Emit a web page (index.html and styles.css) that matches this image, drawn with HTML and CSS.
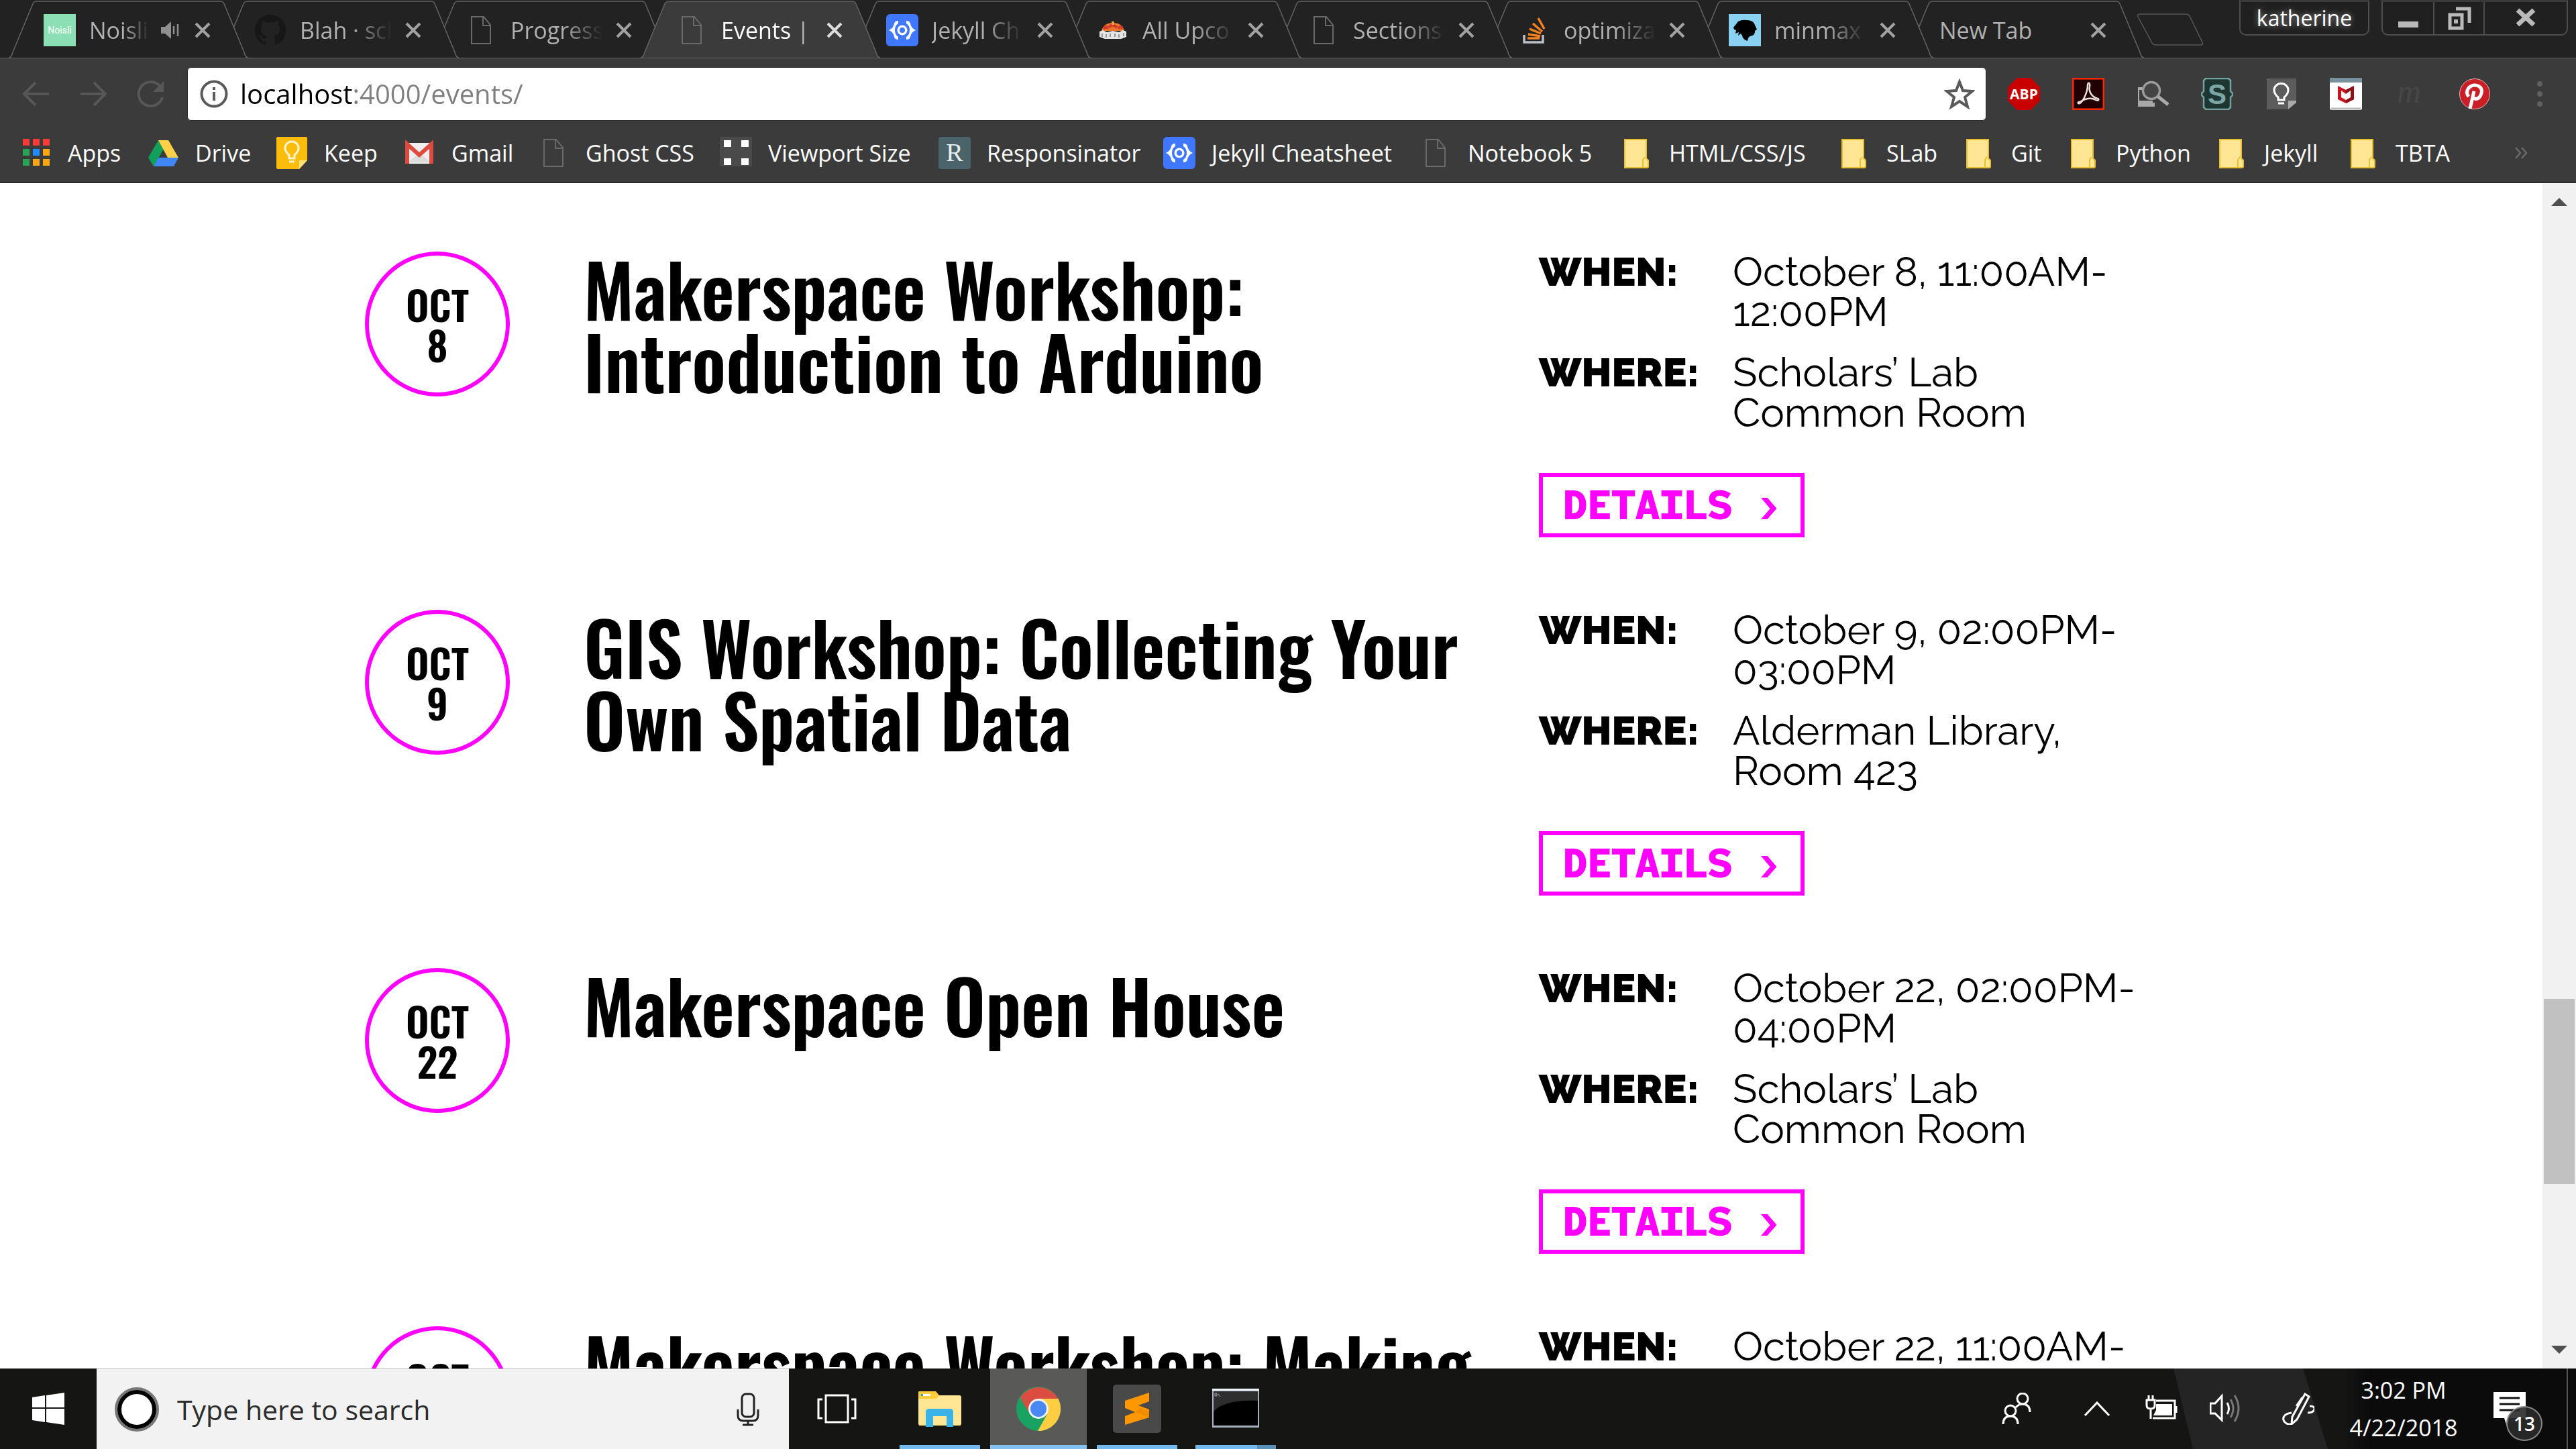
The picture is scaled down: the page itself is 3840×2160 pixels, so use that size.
FILE: index.html
```html
<!DOCTYPE html>
<html lang="en">
<head>
<meta charset="utf-8">
<title>Events</title>
<link rel="stylesheet" href="styles.css">
</head>
<body>
<svg class="defs" aria-hidden="true">
  <symbol id="page" viewBox="0 0 48 48"><path d="M10 4h18l10 12v28H10zM27 4v13h11" fill="none" stroke="#696969" stroke-width="2"/></symbol>
  <symbol id="folder" viewBox="0 0 48 48"><path d="M6 4h32v28l3 3v9q0 2-2 2H6z" fill="#ffe694" stroke="#e8c02f" stroke-width="2"/><path d="M33 46V34l3-4" fill="none" stroke="#e8c02f" stroke-width="2"/></symbol>
  <symbol id="jekyll" viewBox="0 0 48 48"><rect width="48" height="48" rx="6" fill="#3f78ff"/><path d="M18 10q-5 0-6 4-1 7-8 10 7 3 8 10 1 4 6 4v-4q-5-3-5-10t5-10zM30 10q5 0 6 4 1 7 8 10-7 3-8 10-1 4-6 4v-4q5-3 5-10t-5-10z" fill="#fff"/><circle cx="24" cy="24" r="7.500" fill="#fff"/><circle cx="24" cy="24" r="4" fill="#3f78ff"/></symbol>
  <symbol id="close" viewBox="0 0 24 24"><path d="M2 2l20 20M22 2L2 22" fill="none" stroke="currentColor" stroke-width="4"/></symbol>
  <symbol id="tabshape" viewBox="0 0 357 87"><path d="M0 86q4 0 6-8L35 8q2-6 6-6H316q4 0 6 6L351 78q2 8 6 8" fill="currentColor" stroke="#636363" stroke-width="1.500"/></symbol>
</svg>

<header class="browser">
  <div class="tabstrip">
    <div class="tabs">
      <div class="tab"><svg class="shape"><use href="#tabshape"/></svg>
        <svg class="fav" viewBox="0 0 48 48"><rect width="48" height="48" fill="#8cdfb4"/><text x="24" y="29" text-anchor="middle" font-size="14" font-family="Roboto, sans-serif" fill="#fff">Noisli</text></svg>
        <span class="label short">Noisli</span>
        <svg class="audio" viewBox="0 0 30 28"><path d="M1 9h6l9-8v26l-9-8H1z" fill="#8f8f8f"/><path d="M20 8v12M26 5v18" stroke="#8f8f8f" stroke-width="2.500"/></svg>
        <button class="x" aria-label="Close"><svg><use href="#close"/></svg></button></div>
      <div class="tab"><svg class="shape"><use href="#tabshape"/></svg>
        <svg class="fav" viewBox="0 0 48 48"><path d="M24 1a23 23 0 0 0-7 45v-6q-7 1-8-5l-3-3q4-1 6 3 2 2 5 1l2-3q-9-2-9-11 0-4 2-6-1-3 0-6 4 0 7 3 5-2 10 0 3-3 7-3 1 3 0 6 2 2 2 6 0 9-9 11 2 2 2 5v8A23 23 0 0 0 24 1z" fill="#171717"/></svg>
        <span class="label">Blah · scl</span>
        <button class="x" aria-label="Close"><svg><use href="#close"/></svg></button></div>
      <div class="tab"><svg class="shape"><use href="#tabshape"/></svg>
        <svg class="fav"><use href="#page"/></svg><span class="label">Progress</span>
        <button class="x" aria-label="Close"><svg><use href="#close"/></svg></button></div>
      <div class="tab active"><svg class="shape"><use href="#tabshape"/></svg>
        <svg class="fav"><use href="#page"/></svg><span class="label">Events |</span>
        <button class="x" aria-label="Close"><svg><use href="#close"/></svg></button></div>
      <div class="tab"><svg class="shape"><use href="#tabshape"/></svg>
        <svg class="fav"><use href="#jekyll"/></svg><span class="label">Jekyll Ch</span>
        <button class="x" aria-label="Close"><svg><use href="#close"/></svg></button></div>
      <div class="tab"><svg class="shape"><use href="#tabshape"/></svg>
        <svg class="fav" viewBox="0 0 48 48"><path d="M7 25Q10 13 24 13t17 12z" fill="#e8752a"/><path d="M10 22q4-6 6 0M18 20q5-7 12 0M32 22q4-6 6 0" stroke="#d33b2a" stroke-width="4" fill="none"/><path d="M22 11h4v5h-4z" fill="#e8a33a"/><path d="M4 26l5-2 6 3 9-2 9 2 6-3 5 2v8l-8 3H12l-8-3z" fill="#e5e5e5"/><path d="M8 29v5M14 30v5M20 29v5M27 29v5M33 30v5M40 28v5" stroke="#999" stroke-width="2"/></svg>
        <span class="label">All Upco</span>
        <button class="x" aria-label="Close"><svg><use href="#close"/></svg></button></div>
      <div class="tab"><svg class="shape"><use href="#tabshape"/></svg>
        <svg class="fav"><use href="#page"/></svg><span class="label">Sections</span>
        <button class="x" aria-label="Close"><svg><use href="#close"/></svg></button></div>
      <div class="tab"><svg class="shape"><use href="#tabshape"/></svg>
        <svg class="fav" viewBox="0 0 48 48"><path d="M9 31v11h28V31" fill="none" stroke="#b9c0c8" stroke-width="3.500"/><path d="M14 36h18M15 30l18 3M17 22l17 7M22 14l14 12M30 6l9 16" stroke="#f4801f" stroke-width="3.500"/></svg>
        <span class="label">optimiza</span>
        <button class="x" aria-label="Close"><svg><use href="#close"/></svg></button></div>
      <div class="tab"><svg class="shape"><use href="#tabshape"/></svg>
        <svg class="fav" viewBox="0 0 48 48"><rect width="48" height="48" fill="#88d1f1"/><path d="M7 20l4-5 3-4q6-3 12-2 9 0 12 5l4 9-3 2q0 6-4 7-5 1-6 4l-1 4q-7-2-8-8l-2-3-4 3 1-5-5 2 1-5-3-1z" fill="#000"/></svg>
        <span class="label">minmax</span>
        <button class="x" aria-label="Close"><svg><use href="#close"/></svg></button></div>
      <div class="tab"><svg class="shape"><use href="#tabshape"/></svg>
        <span class="label wide">New Tab</span>
        <button class="x" aria-label="Close"><svg><use href="#close"/></svg></button></div>
    </div>
    <button class="newtab" aria-label="New tab"><svg viewBox="0 0 100 48"><path d="M6 1H73q5 0 7 5l18 37q2 4-3 4H29q-5 0-7-5L2 5q-2-4 4-4z" fill="none" stroke="#585858" stroke-width="1.500"/></svg></button>
    <div class="winctl">
      <button class="profile">katherine</button>
      <div class="winbtns">
        <button aria-label="Minimize"><svg viewBox="0 0 40 36"><path d="M5 23h30v9H5z" fill="#b9b9b9"/></svg></button>
        <button aria-label="Restore"><svg viewBox="0 0 40 36"><path d="M6 13h18v20H6zM15 4h20v21" fill="none" stroke="#b9b9b9" stroke-width="5"/><path d="M12 20h6v6h-6z" fill="#b9b9b9"/></svg></button>
        <button aria-label="Close window"><svg viewBox="0 0 40 36"><path d="M8 6l24 22M32 6L8 28" stroke="#b9b9b9" stroke-width="7"/></svg></button>
      </div>
    </div>
  </div>

  <div class="toolbar">
    <button class="nav" aria-label="Back"><svg viewBox="0 0 42 42"><path d="M40 21H4M20 4L3 21l17 17" fill="none" stroke="#575757" stroke-width="4"/></svg></button>
    <button class="nav" aria-label="Forward"><svg viewBox="0 0 42 42"><path d="M2 21h36M22 4l17 17-17 17" fill="none" stroke="#575757" stroke-width="4"/></svg></button>
    <button class="nav" aria-label="Reload"><svg viewBox="0 0 42 42"><path d="M35 9A18 18 0 1 0 39 26" fill="none" stroke="#575757" stroke-width="4"/><path d="M41 2v16H25z" fill="#575757"/></svg></button>
    <div class="omnibox">
      <svg class="info" viewBox="0 0 42 42"><circle cx="21" cy="21" r="18.500" fill="none" stroke="#5a5a5a" stroke-width="4"/><path d="M21 18v13M21 11v4" stroke="#5a5a5a" stroke-width="4"/></svg>
      <input class="url" type="text" aria-label="Address" value="localhost:4000/events/">
      <button class="star" aria-label="Bookmark"><svg viewBox="0 0 46 46"><path d="M23 5l5 13 14 1-11 9 4 14-12-8-12 8 4-14L4 19l14-1z" fill="none" stroke="#5a5a5a" stroke-width="4"/></svg></button>
    </div>
    <div class="exts">
      <svg viewBox="0 0 48 48"><path d="M14 0h20l14 14v20L34 48H14L0 34V14z" fill="#c80000"/><text x="24" y="32" text-anchor="middle" font-family="Open Sans, sans-serif" font-weight="700" font-size="21" fill="#fff">ABP</text></svg>
      <svg viewBox="0 0 48 48"><rect x="1" y="1" width="46" height="46" fill="#200000" stroke="#ff2600" stroke-width="3"/><path d="M9 38c5 3 14-16 14-27 0-5 4-4 3 2-2 8 4 16 12 18 3 1 1 4-3 2-7-4-15-2-22 2-4 2-5 1-4 3z" fill="none" stroke="#eadede" stroke-width="2.500"/></svg>
      <svg viewBox="0 0 48 48"><path d="M2 14h7v4H4v16h20v3h3v6H2z" fill="#a9a9a9"/><circle cx="22" cy="19" r="12.500" fill="#444" stroke="#9a9a9a" stroke-width="3.500"/><path d="M32 28l15 12" stroke="#a9a9a9" stroke-width="5"/></svg>
      <svg viewBox="0 0 48 48"><path d="M7 1h34l3 3v16l3 3v3l-3 3v15l-3 3H7l-3-3V29l-3-3v-3l3-3V4z" fill="#1d3632" stroke="#76a09e" stroke-width="2.500"/><text x="24" y="39" text-anchor="middle" font-family="Liberation Sans, sans-serif" font-weight="700" font-size="42" fill="#7ba6a4">S</text></svg>
      <svg viewBox="0 0 48 48"><path d="M2 1h44v33L33 47H2z" fill="#5c5c5c"/><path d="M46 34v3L34 47V34z" fill="#aaa"/><path d="M19 33v-4q-6-5-6-11a10 9 0 0 1 21 0q0 6-6 11v4zM19 38h9" fill="none" stroke="#fff" stroke-width="3"/></svg>
      <svg viewBox="0 0 48 48"><rect width="48" height="48" rx="3" fill="#fff"/><path d="M0 7V3q0-3 3-3h42q3 0 3 3v4z" fill="#78909c"/><path d="M2 46h44" stroke="#b9b9b9" stroke-width="3"/><path d="M12 12l12 6 12-6v20l-12 6-12-6z" fill="#c8141e"/><path d="M24 18l12-6v20l-12 6v-5l7-3V21l-7 4z" fill="#8a1218"/><path d="M17 19l7 5 7-5v10l-7 4-7-4z" fill="#fff"/></svg>
      <svg viewBox="0 0 48 48"><text x="22" y="37" text-anchor="middle" font-family="Liberation Serif, serif" font-style="italic" font-size="50" fill="#474747">m</text></svg>
      <svg viewBox="0 0 48 48"><circle cx="24" cy="24" r="22.500" fill="#cb1f27" stroke="#e9b6b8"/><path d="M17 46l6-26M15 28q-5-6 0-13 6-6 14-3 7 3 5 11-3 10-10 8-3-1-3-3" fill="none" stroke="#fff" stroke-width="5"/></svg>
    </div>
    <button class="menu" aria-label="Menu"><svg viewBox="0 0 10 42"><circle cx="5" cy="6" r="4" fill="#5f5f5f"/><circle cx="5" cy="21" r="4" fill="#5f5f5f"/><circle cx="5" cy="36" r="4" fill="#5f5f5f"/></svg></button>
  </div>

  <nav class="bookmarks">
    <a href="#"><svg viewBox="0 0 48 48"><g transform="translate(5 3)"><path d="M0 0h10v10H0zM15 0h10v10H15zM30 0h10v10H30z" fill="#f93a37"/><path d="M0 15h10v10H0zM0 30h10v10H0z" fill="#2aa356"/><path d="M15 15h10v10H15z" fill="#1f8cff"/><path d="M30 15h10v10H30zM15 30h10v10H15zM30 30h10v10H30z" fill="#fba713"/></g></svg>Apps</a>
    <a href="#"><svg viewBox="0 0 48 48"><path d="M17 5L2 31l8 13 15-26z" fill="#11a05a"/><path d="M17 5h15l15 26H31z" fill="#ffcf48"/><path d="M17 31h30l-7 13H10z" fill="#4086f4"/></svg>Drive</a>
    <a href="#"><svg viewBox="0 0 48 48"><path d="M3 0h42q2 0 2 2v33L35 48H3q-2 0-2-2V2q0-2 2-2z" fill="#fbbc0c"/><path d="M47 35L35 48V35z" fill="#ffe27a"/><path d="M20 32v-5q-6-5-6-10a10 10 0 0 1 20 0q0 5-6 10v5zM20 37h8" fill="none" stroke="#fff4d0" stroke-width="3"/></svg>Keep</a>
    <a href="#"><svg viewBox="0 0 48 48"><path d="M5 9h38v31H5z" fill="#eee"/><path d="M7 38l17-14 17 14z" fill="#dcdcdc"/><path d="M6 40V11l18 16 18-16v29" fill="none" stroke="#dd4b3e" stroke-width="6"/></svg>Gmail</a>
    <a href="#"><svg><use href="#page"/></svg>Ghost CSS</a>
    <a href="#"><svg viewBox="0 0 48 48"><rect width="48" height="44" fill="#4a4a4a"/><path d="M6 5h11v10H6zM32 5h11v10H32zM6 32h11v10H6zM32 32h11v10H32z" fill="#fff"/></svg>Viewport Size</a>
    <a href="#"><svg viewBox="0 0 48 48"><rect width="48" height="48" rx="4" fill="#4b646b"/><text x="24" y="36" text-anchor="middle" font-family="Liberation Serif, serif" font-size="38" fill="#e8ecec">R</text></svg>Responsinator</a>
    <a href="#"><svg><use href="#jekyll"/></svg>Jekyll Cheatsheet</a>
    <a href="#"><svg><use href="#page"/></svg>Notebook 5</a>
    <a href="#"><svg><use href="#folder"/></svg>HTML/CSS/JS</a>
    <a href="#"><svg><use href="#folder"/></svg>SLab</a>
    <a href="#"><svg><use href="#folder"/></svg>Git</a>
    <a href="#"><svg><use href="#folder"/></svg>Python</a>
    <a href="#"><svg><use href="#folder"/></svg>Jekyll</a>
    <a href="#"><svg><use href="#folder"/></svg>TBTA</a>
    <button class="more" aria-label="More bookmarks"><svg viewBox="0 0 20 18"><path d="M2 1l7 8-7 8M11 1l7 8-7 8" fill="none" stroke="#6b6b6b" stroke-width="2.500"/></svg></button>
  </nav>
</header>

<div class="viewport">
  <main class="events">
    <article class="event">
      <div class="date"><span>OCT</span><span>8</span></div>
      <h2>Makerspace Workshop: Introduction to Arduino</h2>
      <div class="facts">
        <dl><dt>WHEN:</dt><dd>October 8, 11:00AM-<wbr>12:00PM</dd><dt>WHERE:</dt><dd>Scholars’ Lab Common Room</dd></dl>
        <a class="details" href="#">DETAILS ›</a>
      </div>
    </article>
    <article class="event">
      <div class="date"><span>OCT</span><span>9</span></div>
      <h2>GIS Workshop: Collecting Your Own Spatial Data</h2>
      <div class="facts">
        <dl><dt>WHEN:</dt><dd>October 9, 02:00PM-<wbr>03:00PM</dd><dt>WHERE:</dt><dd>Alderman Library, Room 423</dd></dl>
        <a class="details" href="#">DETAILS ›</a>
      </div>
    </article>
    <article class="event">
      <div class="date"><span>OCT</span><span>22</span></div>
      <h2>Makerspace Open House</h2>
      <div class="facts">
        <dl><dt>WHEN:</dt><dd>October 22, 02:00PM-<wbr>04:00PM</dd><dt>WHERE:</dt><dd>Scholars’ Lab Common Room</dd></dl>
        <a class="details" href="#">DETAILS ›</a>
      </div>
    </article>
    <article class="event">
      <div class="date"><span>OCT</span></div>
      <h2>Makerspace Workshop: Making</h2>
      <div class="facts">
        <dl><dt>WHEN:</dt><dd>October 22, 11:00AM-</dd></dl>
      </div>
    </article>
  </main>
  <div class="scrollbar">
    <svg viewBox="0 0 24 12"><path d="M0 12L12 0l12 12z" fill="#505050"/></svg>
    <div class="track"><div class="thumb"></div></div>
    <svg viewBox="0 0 24 12"><path d="M0 0l12 12L24 0z" fill="#505050"/></svg>
  </div>
</div>

<footer class="taskbar">
  <button class="start" aria-label="Start"><svg viewBox="0 0 48 48"><path d="M0 7l19-3v18H0zM21 4l27-4v22H21zM0 24h19v20L0 41zM21 24h27v24l-27-4z" fill="#fff"/></svg></button>
  <div class="search">
    <svg class="cortana" viewBox="0 0 66 66"><circle cx="33" cy="33" r="31" fill="#f2f2f2" stroke="#777" stroke-width="4"/><circle cx="33" cy="33" r="26" fill="#fff" stroke="#000" stroke-width="6"/></svg>
    <input type="text" aria-label="Search" placeholder="Type here to search">
    <svg class="mic" viewBox="0 0 34 50"><rect x="8" y="2" width="18" height="34" rx="6" fill="none" stroke="#222" stroke-width="3"/><path d="M2 25v9q0 8 8 8h14q8 0 8-8v-9M17 42v6M9 48h16" fill="none" stroke="#222" stroke-width="3"/></svg>
  </div>
  <div class="apps">
    <button aria-label="Task view"><svg viewBox="0 0 72 72"><path d="M19 16h33v40H19zM14 22H8v28h6M57 22h6v28h-6" fill="none" stroke="#fff" stroke-width="3"/></svg></button>
    <button class="running" aria-label="File Explorer"><svg viewBox="0 0 72 72"><path d="M4 12q0-2 2-2h23l5 6h31q3 0 3 3v39q0 3-3 3H7q-3 0-3-3z" fill="#ffe694"/><path d="M4 12q0-2 2-2h24l5 6-4 5H4z" fill="#ffcd3a"/><path d="M8 14h14v3H8z" fill="#fff"/><path d="M8 14h3v3H8z" fill="#27a2df"/><path d="M5 61h62" stroke="#a58f3e"/><path d="M15 63V41q0-5 5-5h31q5 0 5 5v22H46V47H26v16z" fill="#39b3e8"/></svg></button>
    <button class="running current" aria-label="Chrome"><svg viewBox="0 0 72 72"><circle cx="36" cy="36" r="33" fill="#19a261"/><path d="M36 36L9 19A33 33 0 0 1 65.500 21H36z" fill="#dc4c40"/><path d="M8 19l15 24 13-7z" fill="#dc4c40"/><path d="M36 21h29.500A33 33 0 0 1 35 69l14-25z" fill="#ffcd42"/><circle cx="36" cy="36" r="15" fill="#f3f3f3"/><circle cx="36" cy="36" r="12" fill="#4a88f4"/></svg></button>
    <button class="running" aria-label="Sublime Text"><svg viewBox="0 0 72 72"><rect width="72" height="72" rx="5" fill="#494949"/><path d="M54 12v13l-16 6 16 6v12L18 60V47l15-6-15-6V24z" fill="#ff9800"/><path d="M33 41l21 8V41l-13-6z" fill="#e58300" opacity=".6"/></svg></button>
    <button class="running multi" aria-label="Command Prompt"><svg viewBox="0 0 72 72"><path d="M1 6h70v58H1z" fill="#a9b2c0"/><path d="M1 6h70v3H1z" fill="#eef1f5"/><path d="M3 10h66v51H3z" fill="#000"/><path d="M3 10h66v14Q20 22 3 40z" fill="#2e2e2e"/><path d="M5 13h3v4H5zM10 14l3 4" stroke="#aaa" fill="none"/></svg></button>
  </div>
  <div class="tray">
    <svg class="people" viewBox="0 0 48 48"><circle cx="32" cy="9" r="8"/><path d="M22 22q4-5 10-5 11 0 11 12"/><circle cx="14" cy="27" r="8"/><path d="M3 47q0-12 11-12t11 12"/></svg>
    <svg viewBox="0 0 48 48"><path d="M6 34l18-19 18 19"/></svg>
    <svg viewBox="0 0 48 48"><path d="M16 12h28v26H11M46 20v10"/><path d="M16 17h24v17H12l4-8z" fill="#fff" stroke="none"/><path d="M5 4v7M11 4v7M2 11h12v8q0 5-6 5t-6-5zM8 24v15"/></svg>
    <svg viewBox="0 0 48 48"><path d="M1 16h7l10-11v36L8 31H1zM26 15q5 9 0 17"/><path d="M31 10q8 14 0 27M37 4q12 19 0 39" stroke="#777"/></svg>
    <svg class="pen" viewBox="0 0 48 48"><path d="M34 2l6 4-18 34-8 7 1-11zM30 7l-9 13M14 30Q0 32 2 41q3 7 13 6M41 20q8 0 7 5-2 5-10 5"/></svg>
    <div class="clock"><span>3:02 PM</span><span>4/22/2018</span></div>
    <button class="notify" aria-label="Notifications"><svg viewBox="0 0 50 52"><path d="M1 1h48v39H25L21 52l-4-12H1z" fill="#fff"/><path d="M10 10h30M10 19h30M10 28h30" stroke="#111" stroke-width="3"/></svg><span class="badge">13</span></button>
  </div>
</footer>
</body>
</html>
```
FILE: styles.css
```css
* { box-sizing: border-box; }
body {
  margin: 0;
  height: 100vh;
  display: flex;
  flex-direction: column;
  overflow: hidden;
  background: #fff;
  font-family: "Open Sans", "Noto Sans", sans-serif;
  font-size: 34px;
}
.defs { position: absolute; width: 0; height: 0; }
button { border: 0; padding: 0; margin: 0; background: none; font: inherit; color: inherit; }
button svg, .exts svg, .tray svg { display: block; }
a { color: inherit; text-decoration: none; }

/* Browser frame */
.browser { flex: none; background: #3b3b3b; border-bottom: 2px solid #2a2a2a; }
.tabstrip {
  display: flex;
  height: 87px;
  padding-left: 13px;
  background: #222;
  border-bottom: 1px solid #636363;
}
.tabs { display: flex; margin-bottom: -1px; }
.tab {
  position: relative;
  display: flex;
  align-items: center;
  flex: none;
  width: 357px;
  height: 87px;
  margin-right: -43px;
  padding: 2px 56px 0 52px;
  color: #222;
}
.tab:nth-child(1) { z-index: 10; }
.tab:nth-child(2) { z-index: 9; }
.tab:nth-child(3) { z-index: 8; }
.tab:nth-child(5) { z-index: 6; }
.tab:nth-child(6) { z-index: 5; }
.tab:nth-child(7) { z-index: 4; }
.tab:nth-child(8) { z-index: 3; }
.tab:nth-child(9) { z-index: 2; }
.tab:nth-child(10) { z-index: 1; }
.tab.active { z-index: 11; color: #3b3b3b; }
.shape { position: absolute; left: 0; top: 0; width: 357px; height: 87px; }
.fav { position: relative; width: 48px; height: 48px; margin-right: 20px; }
.label {
  position: relative;
  width: 140px;
  white-space: nowrap;
  color: #b0b0b0;
  line-height: 48px;
  -webkit-mask-image: linear-gradient(90deg, #000 55%, transparent 98%);
  mask-image: linear-gradient(90deg, #000 55%, transparent 98%);
}
.label.short { width: 92px; }
.label.wide { width: 200px; -webkit-mask-image: none; mask-image: none; }
.active .label { color: #fff; -webkit-mask-image: linear-gradient(90deg, #000 80%, transparent); mask-image: linear-gradient(90deg, #000 80%, transparent); }
.audio { position: relative; width: 30px; height: 28px; margin-left: 14px; }
.x { position: relative; margin-left: auto; color: #a2a2a2; }
.active .x { color: #ddd; }
.x svg { width: 24px; height: 24px; }
.newtab { margin: 0 0 18px 32px; align-self: flex-end; }
.newtab svg { width: 100px; height: 48px; }
.winctl { display: flex; gap: 18px; height: 53px; margin-left: auto; padding-right: 12px; color: #fff; }
.profile, .winbtns {
  border: 2px solid #4d4d4d;
  border-top: 3px solid #3a3a3a;
  border-radius: 0 0 10px 10px;
  background: #202020;
}
.profile { width: 194px; font-size: 32px; line-height: 40px; text-shadow: 0 0 8px #999; }
.winbtns { display: grid; grid-template-columns: 75px 75px 1fr; width: 278px; }
.winbtns button { display: grid; place-items: center; }
.winbtns button + button { border-left: 2px solid #4d4d4d; }
.winbtns svg { width: 40px; height: 36px; }

.toolbar { display: flex; align-items: center; height: 106px; padding: 0 49px 0 33px; }
.nav { width: 42px; height: 42px; margin-right: 43px; }
.nav svg { width: 42px; height: 42px; }
.omnibox {
  display: flex;
  align-items: center;
  flex: 1;
  height: 80px;
  margin: 0 32px 0 -9px;
  padding: 0 16px 0 18px;
  background: #fff;
  border: 1px solid #2a2a2a;
  border-radius: 6px;
}
.info { width: 42px; height: 42px; margin-right: 18px; }
.url {
  flex: 1;
  border: 0;
  padding: 0;
  font: 40px/56px "Open Sans", "Noto Sans", sans-serif;
  color: transparent;
  background: linear-gradient(90deg, #000 170px, #808080 170px);
  -webkit-background-clip: text;
  background-clip: text;
}
.star svg { width: 46px; height: 46px; }
.exts { display: flex; gap: 48px; }
.exts svg { width: 48px; height: 48px; }
.menu { margin-left: 68px; }
.menu svg { width: 10px; height: 42px; }

.bookmarks {
  display: grid;
  grid-template-columns: 190px 192px 190px 200px 272px 326px 335px 382px 300px 324px 186px 156px 221px 196px 1fr auto;
  align-items: center;
  height: 78px;
  padding: 0 72px 8px 29px;
  color: #fff;
}
.bookmarks a { display: flex; align-items: center; gap: 24px; white-space: nowrap; line-height: 48px; }
.bookmarks a svg { width: 48px; height: 48px; }
.more svg { width: 20px; height: 18px; }

/* Page content */
.viewport { display: flex; flex: 1; min-height: 0; }
.events { flex: 1; overflow: hidden; padding: 102px 24px 0; color: #000; }
.event {
  display: grid;
  grid-template-columns: 326px 1fr 952px;
  max-width: 2702px;
  min-height: 426px;
  margin: 0 auto 108px;
}
.date {
  display: flex;
  flex-direction: column;
  justify-content: center;
  width: 216px;
  height: 216px;
  border: 6px solid #f0f;
  border-radius: 50%;
  font: 600 60px/60px Oswald, "Roboto Condensed", sans-serif;
  text-align: center;
}
.date span:only-child { padding-bottom: 60px; }
h2 { margin: 0; padding-right: 64px; font: 600 108px/108px Oswald, "Roboto Condensed", sans-serif; }
dl {
  display: grid;
  grid-template-columns: 289px 1fr;
  row-gap: 30px;
  margin: 0 0 60px;
  font: 400 60px/60px Raleway, Lato, sans-serif;
}
dt { font-weight: 900; }
dd { margin: 0; padding-right: 40px; }
.details {
  display: inline-block;
  height: 96px;
  padding: 12px 30px 0;
  border: 6px solid #f0f;
  color: #f0f;
  font: 700 60px/60px "Red Hat Mono", "Liberation Mono", monospace;
}

.scrollbar {
  display: flex;
  flex-direction: column;
  align-items: center;
  width: 50px;
  padding: 22px 0;
  background: #f1f1f1;
}
.scrollbar svg { width: 24px; height: 12px; }
.track { flex: 1; width: 46px; padding-top: 1167px; margin: 15px 0; }
.thumb { height: 276px; background: #c1c1c1; }

/* Taskbar */
.taskbar {
  position: relative;
  display: flex;
  flex: none;
  height: 120px;
  background: linear-gradient(90deg, #151514 0 91%, #0b0b0b 92%);
  color: #fff;
}
.taskbar::before {
  content: "";
  position: absolute;
  right: 370px;
  width: 230px;
  height: 100%;
  background: #242424;
  clip-path: polygon(0 0, 193px 0, 100% 100%, 29px 100%);
}
.start { width: 144px; display: grid; place-items: center; }
.start svg { width: 48px; height: 48px; }
.search {
  display: flex;
  align-items: center;
  width: 1032px;
  padding: 0 44px 0 27px;
  background: #f2f2f2;
  border-top: 1px solid #b5b5b5;
}
.search input {
  flex: 1;
  min-width: 0;
  margin: 0 27px;
  padding: 0;
  border: 0;
  background: none;
  font: 41px/56px "Open Sans", "Noto Sans", sans-serif;
}
.search input::placeholder { color: #2b2b2b; opacity: 1; }
.cortana { width: 66px; height: 66px; }
.mic { width: 34px; height: 50px; }
.apps { display: flex; gap: 3px; }
.apps button { position: relative; display: grid; place-items: center; width: 144px; }
.apps button:first-child { margin-right: 6px; }
.apps svg { width: 72px; height: 72px; }
.running::after {
  content: "";
  position: absolute;
  left: 12px;
  right: 12px;
  bottom: 0;
  height: 6px;
  background: #76b9ed;
}
.current { background: #595958; }
.current::after { left: 0; right: 0; background: #84c1f2; }
.multi::after { background: linear-gradient(90deg, #76b9ed 77%, #5b90ba 77%); }
.tray { position: relative; display: flex; align-items: center; gap: 48px; margin-left: auto; padding-right: 12px; }
.tray > svg { width: 48px; height: 48px; fill: none; stroke: #fff; stroke-width: 3; }
.tray > .people { margin-right: 23px; }
.tray > .pen { margin-left: 12px; }
.clock { display: flex; flex-direction: column; width: 170px; line-height: 56px; text-align: center; }
.notify { position: relative; width: 112px; height: 120px; border-right: 2px solid #555; }
.notify svg { width: 50px; height: 52px; }
.badge {
  position: absolute;
  left: 20px;
  top: 56px;
  width: 54px;
  height: 52px;
  border: 2px solid #888;
  border-radius: 50%;
  background: #2a2a2ae6;
  font-size: 28px;
  font-weight: 600;
  line-height: 48px;
  text-align: center;
}
```
